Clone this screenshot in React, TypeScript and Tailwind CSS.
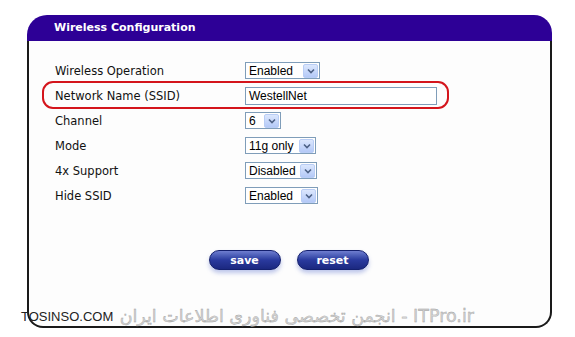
import React from 'react';

const rows = [
  { label: 'Wireless Operation', value: 'Enabled', width: 'w-[75px]' },
  { label: 'Network Name (SSID)', value: 'WestellNet', input: true },
  { label: 'Channel', value: '6', width: 'w-[36px]' },
  { label: 'Mode', value: '11g only', width: 'w-[71px]' },
  { label: '4x Support', value: 'Disabled', width: 'w-[72px]' },
  { label: 'Hide SSID', value: 'Enabled', width: 'w-[73px]' },
];

const Select = ({ value, width }: { value: string; width?: string }) => (
  <div className={`flex h-[17px] items-center justify-between border border-[#7f9db9] bg-white pl-[3px] pr-px ${width}`}>
    <span className="text-[12px] leading-none text-black [font-family:'Liberation_Sans',Arial,sans-serif]">{value}</span>
    <span className="flex h-[14px] w-[15px] items-center justify-center rounded-[2px] border border-[#b9cdf5] bg-gradient-to-b from-[#dce7fd] to-[#b4c9f7]">
      <svg width="8" height="6" viewBox="0 0 8 6">
        <path d="M1 1.5 L4 4.5 L7 1.5" fill="none" stroke="#4d6185" strokeWidth="1.6" />
      </svg>
    </span>
  </div>
);

const PillButton = ({ label }: { label: string }) => (
  <div className="flex h-[20px] w-[72px] items-center justify-center rounded-full border border-[#14206e] bg-gradient-to-b from-[#6f7ed0] via-[#2a3a9e] to-[#1b2880] shadow-[0_3px_4px_rgba(110,130,210,0.45)]">
    <span className="text-[11px] font-bold leading-none text-white [font-family:'DejaVu_Sans',Verdana,sans-serif]">{label}</span>
  </div>
);

export default function App() {
  return (
    <div className="relative h-[337px] w-[575px] overflow-hidden bg-white">
      <div className="ml-[27px] mt-[15px] flex h-[313px] w-[525px] flex-col">
        <div className="flex h-[26px] items-center rounded-tl-[20px] rounded-tr-[18px] bg-[#2d0096] pl-[27px]">
          <span className="text-[11px] font-bold text-white [font-family:'DejaVu_Sans',Verdana,sans-serif]">Wireless Configuration</span>
        </div>
        <div className="flex flex-1 flex-col rounded-b-[16px] border-x-2 border-b-2 border-[#1a1a1a] bg-[#fdfdfd] pt-[17px]">
          {rows.map((r) => (
            <div key={r.label} className="relative flex h-[25px] items-center">
              {r.input && (
                <div className="absolute left-[13px] top-[-2px] h-[28px] w-[407px] rounded-[11px] border-2 border-[#d4151c]" />
              )}
              <span className="w-[216px] pl-[26px] pt-[3px] text-[11.5px] text-[#111] [font-family:'DejaVu_Sans',Verdana,sans-serif]">
                {r.label}
              </span>
              {r.input ? (
                <div className="flex h-[18px] w-[192px] items-center border border-[#7f9db9] bg-white pl-[3px]">
                  <span className="text-[12px] leading-none text-black [font-family:'Liberation_Sans',Arial,sans-serif]">{r.value}</span>
                </div>
              ) : (
                <Select value={r.value} width={r.width} />
              )}
            </div>
          ))}
          <div className="mt-[42px] flex justify-center gap-[16px] pr-[2px]">
            <PillButton label="save" />
            <PillButton label="reset" />
          </div>
        </div>
      </div>
      <span className="absolute left-[21px] top-[307px] text-[13px] text-[#222] [font-family:'Liberation_Sans',Arial,sans-serif]">
        TOSINSO.COM
      </span>
      <span
        dir="rtl"
        className="absolute right-[101px] top-[303px] text-[17.5px] text-[#d2d2d2] [font-family:'DejaVu_Sans',sans-serif] [-webkit-text-stroke:0.35px_#9a9a9a]"
      >
        ITPro.ir - انجمن تخصصی فناوری اطلاعات ایران
      </span>
    </div>
  );
}
